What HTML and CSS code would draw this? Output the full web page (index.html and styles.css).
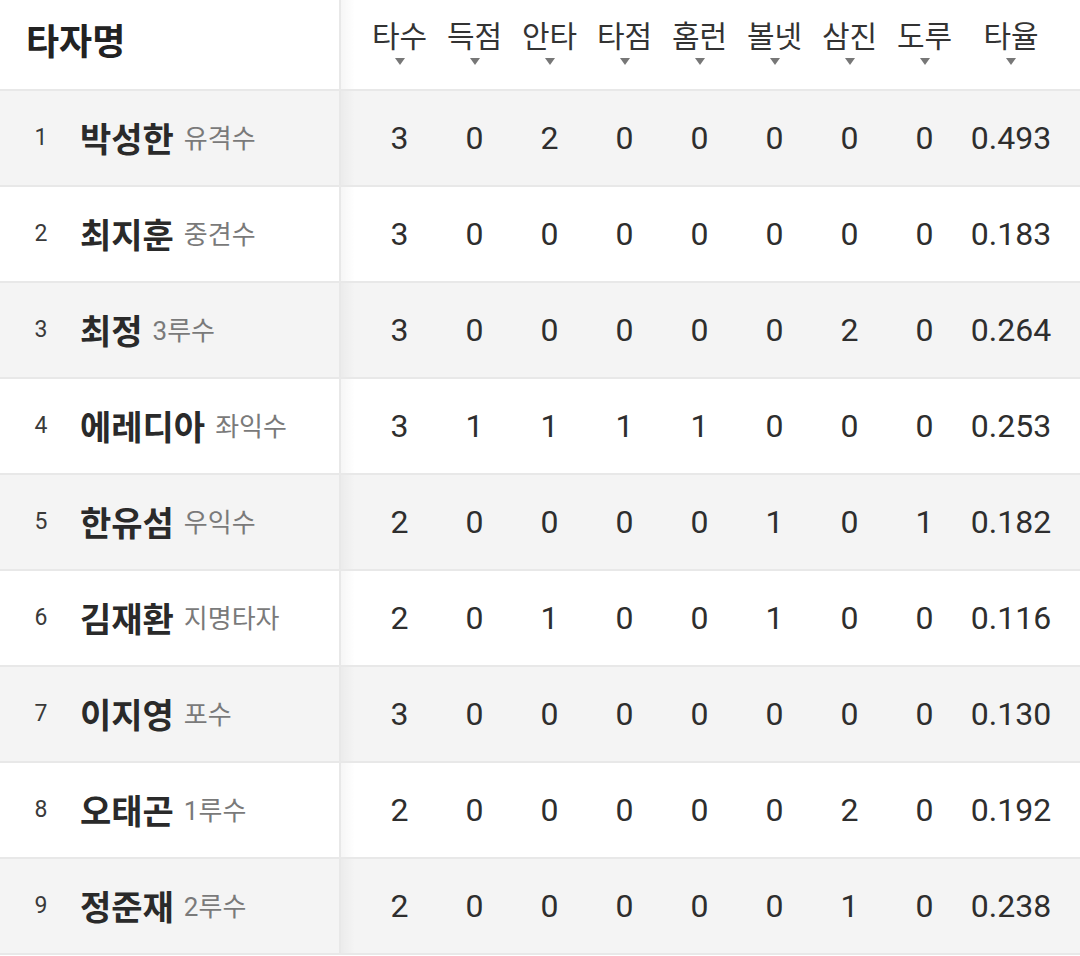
FILE: index.html
```html
<!DOCTYPE html>
<html lang="ko">
<head>
<meta charset="utf-8">
<title>타자 기록</title>
<link rel="stylesheet" href="styles.css">
</head>
<body>
<div class="table">
  <div class="row head">
    <div class="namecell"><span class="title">타자명</span></div>
    <div class="stats">
      <div class="col"><span class="lbl">타수</span><i class="tri"></i></div>
      <div class="col"><span class="lbl">득점</span><i class="tri"></i></div>
      <div class="col"><span class="lbl">안타</span><i class="tri"></i></div>
      <div class="col"><span class="lbl">타점</span><i class="tri"></i></div>
      <div class="col"><span class="lbl">홈런</span><i class="tri"></i></div>
      <div class="col"><span class="lbl">볼넷</span><i class="tri"></i></div>
      <div class="col"><span class="lbl">삼진</span><i class="tri"></i></div>
      <div class="col"><span class="lbl">도루</span><i class="tri"></i></div>
      <div class="col avg"><span class="lbl">타율</span><i class="tri"></i></div>
    </div>
  </div>

  <div class="row odd">
    <div class="namecell"><span class="num">1</span><span class="name">박성한</span><span class="pos">유격수</span></div>
    <div class="stats"><span class="c">3</span><span class="c">0</span><span class="c">2</span><span class="c">0</span><span class="c">0</span><span class="c">0</span><span class="c">0</span><span class="c">0</span><span class="c avg">0.493</span></div>
  </div>
  <div class="row">
    <div class="namecell"><span class="num">2</span><span class="name">최지훈</span><span class="pos">중견수</span></div>
    <div class="stats"><span class="c">3</span><span class="c">0</span><span class="c">0</span><span class="c">0</span><span class="c">0</span><span class="c">0</span><span class="c">0</span><span class="c">0</span><span class="c avg">0.183</span></div>
  </div>
  <div class="row odd">
    <div class="namecell"><span class="num">3</span><span class="name">최정</span><span class="pos">3루수</span></div>
    <div class="stats"><span class="c">3</span><span class="c">0</span><span class="c">0</span><span class="c">0</span><span class="c">0</span><span class="c">0</span><span class="c">2</span><span class="c">0</span><span class="c avg">0.264</span></div>
  </div>
  <div class="row">
    <div class="namecell"><span class="num">4</span><span class="name">에레디아</span><span class="pos">좌익수</span></div>
    <div class="stats"><span class="c">3</span><span class="c">1</span><span class="c">1</span><span class="c">1</span><span class="c">1</span><span class="c">0</span><span class="c">0</span><span class="c">0</span><span class="c avg">0.253</span></div>
  </div>
  <div class="row odd">
    <div class="namecell"><span class="num">5</span><span class="name">한유섬</span><span class="pos">우익수</span></div>
    <div class="stats"><span class="c">2</span><span class="c">0</span><span class="c">0</span><span class="c">0</span><span class="c">0</span><span class="c">1</span><span class="c">0</span><span class="c">1</span><span class="c avg">0.182</span></div>
  </div>
  <div class="row">
    <div class="namecell"><span class="num">6</span><span class="name">김재환</span><span class="pos">지명타자</span></div>
    <div class="stats"><span class="c">2</span><span class="c">0</span><span class="c">1</span><span class="c">0</span><span class="c">0</span><span class="c">1</span><span class="c">0</span><span class="c">0</span><span class="c avg">0.116</span></div>
  </div>
  <div class="row odd">
    <div class="namecell"><span class="num">7</span><span class="name">이지영</span><span class="pos">포수</span></div>
    <div class="stats"><span class="c">3</span><span class="c">0</span><span class="c">0</span><span class="c">0</span><span class="c">0</span><span class="c">0</span><span class="c">0</span><span class="c">0</span><span class="c avg">0.130</span></div>
  </div>
  <div class="row">
    <div class="namecell"><span class="num">8</span><span class="name">오태곤</span><span class="pos">1루수</span></div>
    <div class="stats"><span class="c">2</span><span class="c">0</span><span class="c">0</span><span class="c">0</span><span class="c">0</span><span class="c">0</span><span class="c">2</span><span class="c">0</span><span class="c avg">0.192</span></div>
  </div>
  <div class="row odd">
    <div class="namecell"><span class="num">9</span><span class="name">정준재</span><span class="pos">2루수</span></div>
    <div class="stats"><span class="c">2</span><span class="c">0</span><span class="c">0</span><span class="c">0</span><span class="c">0</span><span class="c">0</span><span class="c">1</span><span class="c">0</span><span class="c avg">0.238</span></div>
  </div>
</div>
</body>
</html>
```

FILE: styles.css
```css
html, body {
  margin: 0;
  padding: 0;
  background: #ffffff;
}
body {
  font-family: "Roboto", "Noto Sans CJK KR", sans-serif;
  color: #2b2b2b;
  width: 1080px;
  height: 956px;
  overflow: hidden;
}
.table {
  display: flex;
  flex-direction: column;
}
.row {
  display: flex;
  height: 94px;
  border-bottom: 2px solid #e8e8e8;
  background: #ffffff;
}
.row.odd {
  background: #f4f4f4;
}
.row.head {
  height: 89px;
}
.namecell {
  flex: none;
  width: 341px;
  box-sizing: border-box;
  border-right: 2px solid #e8e8e8;
  display: flex;
  align-items: center;
  align-self: stretch;
}
.head .namecell {
  align-items: flex-start;
  padding-top: 11px;
  padding-left: 26px;
}
.title {
  font-family: "Noto Sans CJK KR", sans-serif;
  font-weight: 700;
  font-size: 36px;
  line-height: 56px;
  color: #222;
}
.num {
  width: 80px;
  flex: none;
  text-align: center;
  font-size: 23px;
  color: #3a3a3a;
  line-height: 48px;
  margin-left: 1px;
}
.name {
  font-family: "Noto Sans CJK KR", sans-serif;
  font-weight: 700;
  font-size: 34px;
  line-height: 48px;
  color: #2a2a2a;
  margin-left: -1px;
}
.pos {
  margin-left: 10px;
  font-family: "Roboto", "Noto Sans CJK KR", sans-serif;
  font-size: 26px;
  color: #7a7a7a;
  line-height: 48px;
  margin-top: 2px;
}
.stats {
  flex: 1;
  display: flex;
  align-items: center;
  padding-left: 21px;
  background-image: linear-gradient(to right, rgba(0, 0, 0, 0.035), rgba(0, 0, 0, 0) 14px);
}
.head .stats {
  align-items: flex-start;
}
.col {
  width: 75px;
  display: flex;
  flex-direction: column;
  align-items: center;
  padding-top: 14px;
}
.col.avg {
  width: 98px;
}
.lbl {
  font-family: "Noto Sans CJK KR", sans-serif;
  font-size: 30px;
  line-height: 40px;
  color: #333;
}
.tri {
  display: block;
  width: 0;
  height: 0;
  margin-top: 4px;
  border-left: 5px solid transparent;
  border-right: 5px solid transparent;
  border-top: 7px solid #777;
}
.c {
  width: 75px;
  text-align: center;
  font-size: 32px;
  color: #2e2e2e;
  line-height: 40px;
}
.c.avg {
  width: 98px;
}
```
